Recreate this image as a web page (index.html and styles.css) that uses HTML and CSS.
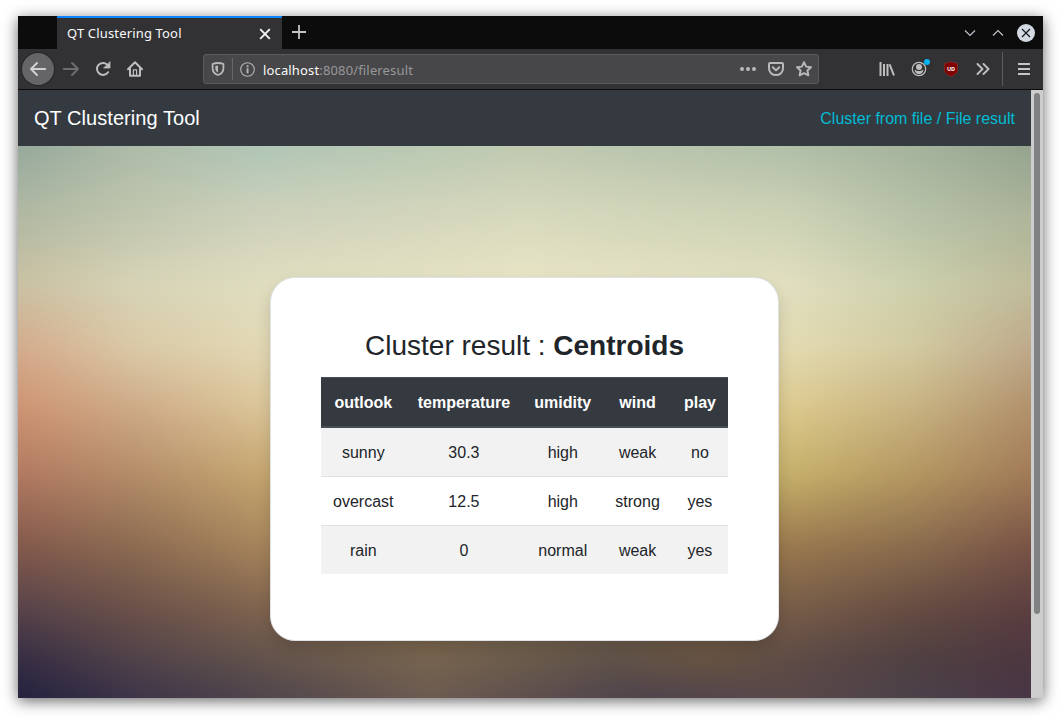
FILE: index.html
```html
<!DOCTYPE html>
<html lang="en">
<head>
<meta charset="utf-8">
<title>QT Clustering Tool</title>
<link rel="stylesheet" href="styles.css">
</head>
<body>
<div class="window">
  <div class="tabbar">
    <div class="tab">
      <span class="tab-title">QT Clustering Tool</span>
      <svg width="12" height="12" viewBox="0 0 12 12" fill="none" stroke="#f4f4f5" stroke-width="1.9"><path d="M1.2 1.2l9.6 9.6M10.8 1.2l-9.6 9.6"/></svg>
    </div>
    <svg class="new-tab" width="14" height="14" viewBox="0 0 14 14" fill="none" stroke="#c4c4c6" stroke-width="1.8"><path d="M7 0v14M0 7h14"/></svg>
    <div class="controls">
      <svg width="12" height="8" viewBox="0 0 12 8" fill="none" stroke="#c3c8d0" stroke-width="1.1"><path d="M1 1.5l5 5 5-5"/></svg>
      <svg width="12" height="8" viewBox="0 0 12 8" fill="none" stroke="#c3c8d0" stroke-width="1.1"><path d="M1 6.5l5-5 5 5"/></svg>
      <svg width="18" height="18" viewBox="0 0 18 18"><circle cx="9" cy="9" r="9" fill="#d3dae3"/><path d="M5 5l8 8M13 5l-8 8" stroke="#16181b" stroke-width="1.2"/></svg>
    </div>
  </div>

  <div class="toolbar">
    <div class="nav-buttons">
      <span class="btn back"><svg width="18" height="16" viewBox="0 0 18 16" fill="none" stroke="#cfcfd0" stroke-width="2" stroke-linecap="round" stroke-linejoin="round"><path d="M16.2 8H2M8 2L2 8l6 6"/></svg></span>
      <span class="btn forward"><svg width="18" height="16" viewBox="0 0 18 16" fill="none" stroke="#6d6d6f" stroke-width="2" stroke-linecap="round" stroke-linejoin="round"><path d="M1.8 8H16M10 2l6 6-6 6"/></svg></span>
      <span class="btn"><svg width="16" height="16" viewBox="0 0 16 16" fill="none" stroke="#bebebf" stroke-width="2" stroke-linecap="round"><path d="M13 11.2A6 6 0 1 1 12.2 3.600"/><path d="M15 1v6H9z" fill="#bebebf" stroke-width=".8" stroke-linejoin="round"/></svg></span>
      <span class="btn"><svg width="18" height="18" viewBox="0 0 18 18" fill="none" stroke="#bebebf" stroke-width="2" stroke-linecap="round" stroke-linejoin="round"><path d="M2 9.300L9 2.200l7 7.100M4 8.500v7.300h10V8.500"/><path d="M7.400 15.500V9.800h3.200v5.700" stroke-width="1.200"/></svg></span>
    </div>
    <div class="urlbar">
      <svg class="shield" width="14" height="14" viewBox="0 0 14 14"><path d="M7 1C5 1 3 1.400 1.600 2v4.200C1.600 9.500 4 12 7 13c3-1 5.400-3.500 5.400-6.800V2C11 1.400 9 1 7 1z" fill="none" stroke="#b9b9ba" stroke-width="1.800"/><path d="M7 3.500v7C5.200 9.600 4.300 8.300 4.300 6.200V4z" fill="#b9b9ba"/></svg>
      <span class="url-sep"></span>
      <svg width="15" height="15" viewBox="0 0 15 15"><circle cx="7.500" cy="7.500" r="6.800" fill="none" stroke="#b4b4b6" stroke-width="1.100"/><path d="M6.600 3.300h1.900v1.900H6.600zM6.600 6.300h1.900v5H6.600z" fill="#b4b4b6"/></svg>
      <span class="url">localhost<span class="path">:8080/fileresult</span></span>
      <div class="url-actions">
        <svg width="16" height="16" viewBox="0 0 16 16" fill="#b9b9bb"><circle cx="2" cy="8" r="2"/><circle cx="8" cy="8" r="2"/><circle cx="14" cy="8" r="2"/></svg>
        <svg width="16" height="16" viewBox="0 0 16 16" fill="none" stroke="#b9b9bb" stroke-width="2" stroke-linecap="round" stroke-linejoin="round"><path d="M2 2h12q1 0 1 1v4.500a7 6.600 0 0 1-14 0V3q0-1 1-1z"/><path d="M4.800 6.300L8 9.400l3.200-3.100"/></svg>
        <svg width="16" height="16" viewBox="0 0 16 16" fill="none" stroke="#b9b9bb" stroke-width="1.900" stroke-linejoin="round"><path d="M8 1.200l2.100 4.400 4.900.600-3.600 3.300 1 4.900L8 12.100l-4.400 2.300 1-4.900L1 6.200l4.900-.600z"/></svg>
      </div>
    </div>
    <div class="tools">
      <span class="btn"><svg width="16" height="14" viewBox="0 0 16 14" fill="none" stroke="#bebebf" stroke-width="2"><path d="M1.500 0v14M5 2v12M8.500 2v12M10.600 2.300L15 13.500"/></svg></span>
      <span class="btn account"><svg width="16" height="16" viewBox="0 0 16 16"><circle cx="8" cy="8" r="6.700" fill="none" stroke="#bebebf" stroke-width="1.200"/><circle cx="8" cy="6" r="3" fill="#bebebf"/><path d="M3.600 8.600c.8.900 2 1.500 4.400 1.500s3.600-.600 4.400-1.500c-.2 3.200-2 4.600-4.400 4.600s-4.200-1.400-4.400-4.600z" fill="#bebebf"/></svg></span>
      <span class="btn"><svg width="14" height="16" viewBox="0 0 14 16"><path d="M7 .4C5 1.700 2.600 2.200.4 2.200V8c0 4 3.200 6 6.600 7.600C10.400 14 13.600 12 13.600 8V2.200C11.400 2.200 9 1.700 7 .4z" fill="#800000" stroke="#a23a3a" stroke-width=".5"/><text class="ublock" x="7" y="9.700" text-anchor="middle">UD</text></svg></span>
      <span class="btn"><svg width="14" height="12" viewBox="0 0 14 12" fill="none" stroke="#bebebf" stroke-width="1.900" stroke-linecap="round" stroke-linejoin="round"><path d="M1.500 1l5 5-5 5M7.500 1l5 5-5 5"/></svg></span>
    </div>
    <span class="tool-sep"></span>
    <span class="btn menu"><svg width="12" height="12" viewBox="0 0 12 12" fill="#c6c6c7"><path d="M0 0h12v2H0zM0 5h12v2H0zM0 10h12v2H0z"/></svg></span>
  </div>

  <div class="viewport">
    <div class="page">
      <nav class="navbar">
        <span class="brand">QT Clustering Tool</span>
        <span class="crumbs">Cluster from file / File result</span>
      </nav>
      <main class="content">
        <div class="backdrop">
          <i class="band b0"></i><i class="band b1"></i><i class="band b2"></i><i class="band b3"></i><i class="band b4"></i><i class="band b5"></i><i class="band b6"></i><i class="band b7"></i><i class="band b8"></i><i class="band b9"></i>
        </div>
        <section class="card">
          <h3>Cluster result : <b>Centroids</b></h3>
          <table>
            <thead><tr><th>outlook</th><th>temperature</th><th>umidity</th><th>wind</th><th>play</th></tr></thead>
            <tbody>
              <tr><td>sunny</td><td>30.3</td><td>high</td><td>weak</td><td>no</td></tr>
              <tr><td>overcast</td><td>12.5</td><td>high</td><td>strong</td><td>yes</td></tr>
              <tr><td>rain</td><td>0</td><td>normal</td><td>weak</td><td>yes</td></tr>
            </tbody>
          </table>
        </section>
      </main>
    </div>
    <div class="scrollbar"><div class="thumb"></div></div>
  </div>
</div>
</body>
</html>
```

FILE: styles.css
```css
* { box-sizing: border-box; }
body {
  margin: 0;
  width: 1061px;
  height: 718px;
  padding: 16px 18px 20px;
  background: #fff;
  overflow: hidden;
}
svg { display: block; flex: none; }
.window {
  display: flex;
  flex-direction: column;
  width: 1025px;
  height: 682px;
  box-shadow: 0 3px 14px rgba(0, 0, 0, .6);
  font-family: "Noto Sans", sans-serif;
  font-size: 13px;
}

/* Tab strip */
.tabbar {
  display: flex;
  align-items: center;
  height: 33px;
  padding-left: 39px;
  background: #0c0c0d;
}
.tab {
  display: flex;
  align-items: center;
  justify-content: space-between;
  width: 225px;
  height: 33px;
  padding: 0 11px 0 10px;
  background: #323234;
  border-top: 2px solid #0a84ff;
  color: #f9f9fa;
}
.tab-title { padding-bottom: 2px; line-height: 18px; letter-spacing: .16px; }
.new-tab { margin-left: 10px; margin-top: -2px; }
.controls {
  display: flex;
  align-items: center;
  gap: 16px;
  margin-left: auto;
  padding-right: 8px;
}
.controls svg:last-child { margin-left: -3px; }
.controls { padding-right: 8px; }

/* Navigation toolbar */
.toolbar {
  display: flex;
  align-items: center;
  height: 41px;
  padding-left: 4px;
  background: #323234;
  border-bottom: 1px solid #0c0c0d;
}
.btn {
  display: flex;
  align-items: center;
  justify-content: center;
  width: 32px;
  height: 32px;
}
.nav-buttons { display: flex; width: 181px; }
.back {
  border-radius: 50%;
  background: #656567;
  box-shadow: 0 0 0 1px #242426;
}
.forward { margin-left: 1px; }
.urlbar {
  display: flex;
  align-items: center;
  width: 616px;
  height: 30px;
  padding: 0 6px 0 7px;
  background: #474749;
  border: 1px solid #5b5b5d;
  border-radius: 3px;
}
.url-sep { width: 1px; height: 22px; margin: 0 7px; background: #66666d; }
.url { margin-left: 8px; line-height: 18px; padding-top: 2px; color: #f9f9fa; letter-spacing: .15px; }
.path { color: #98989a; }
.url-actions { display: flex; gap: 12px; margin-left: auto; }
.tools { display: flex; margin-left: 52px; }
.account { position: relative; }
.account::after {
  content: "";
  position: absolute;
  top: 6px;
  right: 5px;
  width: 6px;
  height: 6px;
  border-radius: 50%;
  background: #00b3f4;
}
.ublock { font: 700 5.5px "Noto Sans", sans-serif; fill: #fff; }
.tool-sep { width: 1px; height: 34px; margin: 0 5px 0 3px; background: #5a5a5c; }

/* Web page */
.viewport { display: flex; flex: 1; }
.page {
  display: flex;
  flex-direction: column;
  width: 1013px;
  font-family: "Liberation Sans", Arial, sans-serif;
  font-size: 16px;
  line-height: 24px;
  color: #212529;
}
.navbar {
  display: flex;
  align-items: center;
  justify-content: space-between;
  height: 56px;
  padding: 0 16px;
  background: #343a40;
}
.brand { font-size: 20px; line-height: 30px; letter-spacing: .05px; color: #fff; }
.crumbs { padding-top: 2px; color: #00bcd4; }
.content {
  display: flex;
  justify-content: center;
  position: relative;
  flex: 1;
  padding-top: 131px;
  overflow: hidden;
}

/* Horizontal colour bands, each fading into the one above it.
   The backdrop overhangs the content by 20px so the blur has no soft edge. */
.backdrop { position: absolute; inset: -20px; filter: blur(9px); }
.band {
  position: absolute;
  inset: 0;
  -webkit-mask-image: linear-gradient(transparent calc(var(--from) + 20px), #000 calc(var(--to) + 20px));
  mask-image: linear-gradient(transparent calc(var(--from) + 20px), #000 calc(var(--to) + 20px));
}
.b0 { --from: -21px; --to: -20px; background: linear-gradient(90deg, #96a99c 2%, #aebba8 13%, #b0c6b6 25%, #c0cab1 50%, #b1bfa9 75%, #a5b29c 87%, #95a38f 98%); }
.b1 { --from: 0px; --to: 70px; background: linear-gradient(90deg, #b1b9a3 2%, #c0c6ae 13%, #ced1bb 25%, #d7d9bd 50%, #cdd2b5 75%, #b7c2a8 87%, #adb59a 98%); }
.b2 { --from: 70px; --to: 140px; background: linear-gradient(90deg, #cbc1a3 2%, #d7d4b7 13%, #e0dec0 26%, #e9e5c6 50%, #e1dfc0 75%, #cdd0ad 87%, #c0bd9b 98%); }
.b3 { --from: 140px; --to: 205px; background: linear-gradient(90deg, #d4aa8b 2%, #dac8a5 13%, #e3d9b5 26%, #e9e0bc 50%, #e3dab0 75%, #d2c99f 87%, #bea88a 98%); }
.b4 { --from: 205px; --to: 265px; background: linear-gradient(90deg, #cd9372 2%, #cda986 13%, #dcc698 26%, #dfcb94 50%, #dcc98c 75%, #c7b180 87%, #b0906a 98%); }
.b5 { --from: 265px; --to: 330px; background: linear-gradient(90deg, #b07860 2%, #b38c68 13%, #c6a770 26%, #cbb26b 50%, #c6b06a 75%, #b39660 87%, #a17a57 98%); }
.b6 { --from: 330px; --to: 400px; background: linear-gradient(90deg, #83594c 2%, #8c6b51 13%, #a8865c 26%, #a5855a 50%, #9a794e 75%, #8a6c4d 87%, #785346 98%); }
.b7 { --from: 400px; --to: 465px; background: linear-gradient(90deg, #56424a 2%, #6a5049 13%, #80644f 26%, #806b50 50%, #755b48 76%, #654b42 87%, #5a3e40 98%); }
.b8 { --from: 465px; --to: 515px; background: linear-gradient(90deg, #352d43 2%, #50424a 13%, #62534c 26%, #77654f 41%, #5e5249 58%, #675342 68%, #5a4846 78%, #4e4042 87%, #4c3640 98%); }
.b9 { --from: 515px; --to: 552px; background: linear-gradient(90deg, #24213f 2%, #3c3448 13%, #52464d 26%, #6b5a50 41%, #50434c 60%, #51444c 67%, #584849 75%, #4c414a 87%, #483645 98%); }

.card {
  position: relative;
  width: 509px;
  height: 364px;
  padding: 50px;
  background: #fff;
  border: 1px solid #dee2e6;
  border-radius: 25px;
  box-shadow: 0 8px 16px rgba(0, 0, 0, .15);
}
.card h3 {
  margin: 0 0 14px;
  padding-top: 1px;
  font-size: 28px;
  font-weight: 400;
  line-height: 34px;
  text-align: center;
}
table { width: 100%; border-collapse: collapse; text-align: center; }
th, td { padding: 13px 12px 11px; border-top: 1px solid #dee2e6; }
th {
  color: #fff;
  background: #343a40;
  border-color: #454d55;
  border-bottom: 2px solid #454d55;
}
tbody tr:nth-child(odd) { background: #f2f2f2; }

.scrollbar { width: 12px; padding: 3px; background: #cdcdcd; }
.thumb { width: 6px; height: 521px; border-radius: 3px; background: #7e8282; }
```
